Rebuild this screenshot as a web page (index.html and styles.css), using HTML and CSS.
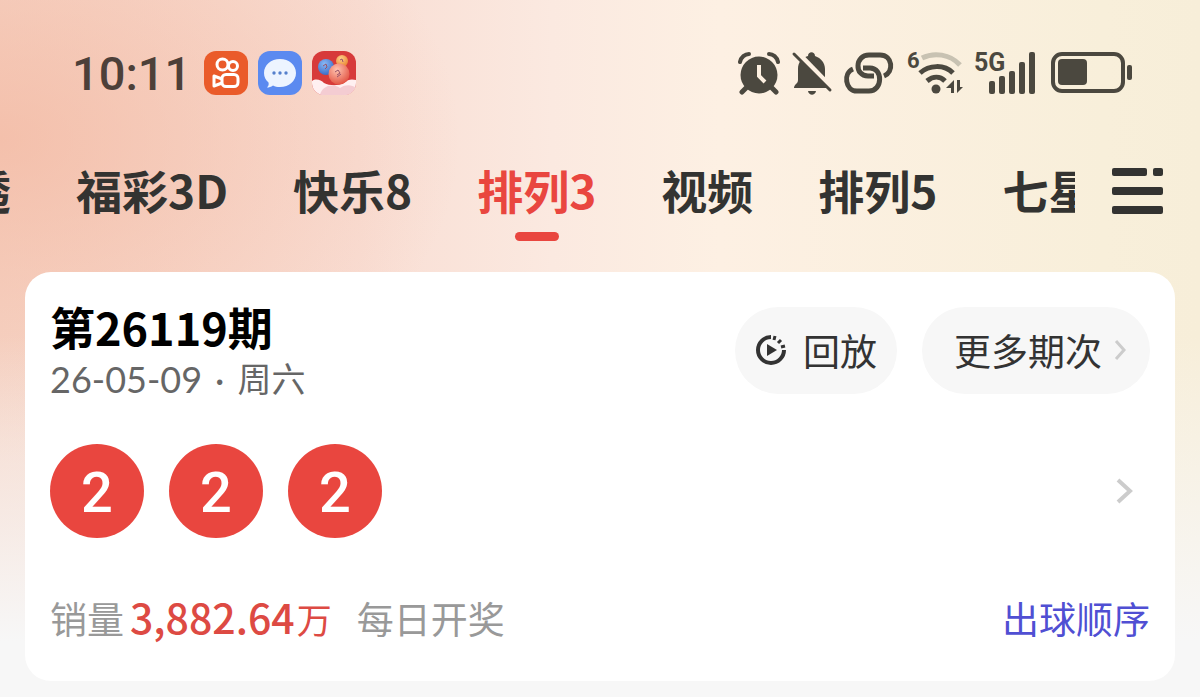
FILE: index.html
```
<!DOCTYPE html>
<html lang="zh-CN">
<head>
    <meta charset="UTF-8">
    <meta name="viewport" content="width=device-width, initial-scale=1.0">
    <title>排列3</title>
    <link rel="stylesheet" href="styles.css">
</head>
<body>
    <header class="status-bar">
        <div class="status-left">
            <span class="time">10:11</span>
            <svg class="app-icon" viewBox="0 0 44 44">
                <rect width="44" height="44" rx="12" fill="#ea5b2a"/>
                <g fill="none" stroke="#fff" stroke-width="3" stroke-linejoin="round">
                    <circle cx="18.500" cy="13.500" r="5.500"/>
                    <circle cx="29" cy="15" r="4.500"/>
                    <rect x="18" y="23.500" width="16" height="12" rx="4"/>
                    <path d="M18 28l-8-3v10l8-3"/>
                </g>
            </svg>
            <svg class="app-icon" viewBox="0 0 44 44">
                <rect width="44" height="44" rx="12" fill="#5b8af0"/>
                <path d="M22 8c9 0 16 6 16 14s-7 14-16 14c-3 0-5-.5-7-1.500-2 1.500-4 2-6 2 1.500-1.500 2-3 1.500-5C7.500 29 6 26 6 22 6 14 13 8 22 8z" fill="#edf4ff"/>
                <g fill="#5580cc"><circle cx="16" cy="22" r="1.700"/><circle cx="22" cy="22" r="1.700"/><circle cx="28" cy="22" r="1.700"/></g>
            </svg>
            <svg class="app-icon" viewBox="0 0 44 44">
                <defs>
                    <clipPath id="tile"><rect width="44" height="44" rx="12"/></clipPath>
                    <radialGradient id="ball-blue" cx=".4" cy=".3" r=".7"><stop offset="0" stop-color="#8ab9f5"/><stop offset="1" stop-color="#3b6cc8"/></radialGradient>
                    <radialGradient id="ball-red" cx=".4" cy=".3" r=".7"><stop offset="0" stop-color="#ffc4b0"/><stop offset="1" stop-color="#e35645"/></radialGradient>
                    <radialGradient id="ball-gold" cx=".4" cy=".3" r=".7"><stop offset="0" stop-color="#ffd08a"/><stop offset="1" stop-color="#ea8735"/></radialGradient>
                </defs>
                <g clip-path="url(#tile)">
                    <rect width="44" height="44" fill="#d73a3a"/>
                    <path d="M0 30c4-3 9-1 12 2 6 3 14 3 20 0 4-4 8-4 12-3v15H0z" fill="#fff0f1"/>
                    <path d="M8 44c2-9 12-12 20-7 6-4 12-3 16 0v7z" fill="#f4ccd2"/>
                    <circle cx="30" cy="10" r="6" fill="url(#ball-gold)"/>
                    <circle cx="14" cy="16" r="8" fill="url(#ball-blue)"/>
                    <circle cx="27" cy="23" r="10.500" fill="url(#ball-red)"/>
                    <path d="M11 15l3-2 1 3-2 2M28 9l2-1 1 3M23 21l3-2 2 3-3 2m0 2l4-3" fill="none" stroke="#9a5368" stroke-width="1"/>
                </g>
            </svg>
        </div>
        <div class="status-right">
            <svg width="42" height="44" viewBox="0 0 42 44" fill="#4b483f">
                <circle cx="21" cy="24" r="18.500"/>
                <path d="M8 37l-4 4M34 37l4 4" stroke="#4b483f" stroke-width="5" stroke-linecap="round"/>
                <path d="M2 11c1-5 5-8 9-8M40 11c-1-5-5-8-9-8" fill="none" stroke="#4b483f" stroke-width="4" stroke-linecap="round"/>
                <path d="M21 14v11l6 6" fill="none" stroke="#fdf0e1" stroke-width="4"/>
            </svg>
            <svg width="38" height="44" viewBox="0 0 38 44" fill="#4b483f">
                <path d="M15 5c0-5 7-5 7 0 6 2 10 7 10 13v12l4 7H1c0-4 4-4 4-8V18C5 11 9 7 15 5z"/>
                <path d="M15 40h8c-1 5-7 5-8 0z"/>
                <path d="M4 1l36 37" stroke="#fdf0e1" stroke-width="5"/>
                <path d="M1 3l36 36" stroke="#4b483f" stroke-width="3" stroke-linecap="round"/>
            </svg>
            <svg width="50" height="44" viewBox="0 0 50 44" fill="none" stroke="#4b483f" stroke-width="5">
                <path d="M40 25C50 21 49 4 36 4H25C11 4 10 25 24 25h6"/>
                <path d="M9 18C-1 22 1 40 13 40h12c14 0 14-23 1-23h-7"/>
            </svg>
            <svg width="56" height="44" viewBox="0 0 56 44">
                <text class="wifi-label" x="0" y="17">6</text>
                <g fill="none" stroke="#4b483f" stroke-width="5">
                    <path d="M15 7c12-6 28-4 38 7" stroke="#c8c2b2"/>
                    <path d="M13 22c9-8 24-9 33 0"/>
                    <path d="M20 30c6-5 13-5 18 0"/>
                </g>
                <circle cx="29" cy="38" r="4.500" fill="#4b483f"/>
                <path d="M47 29v13h-3v-5h-5zM50 29v13l6-6h-3v-7z" fill="#4b483f"/>
            </svg>
            <svg width="62" height="44" viewBox="2 0 62 44" fill="#4b483f">
                <text class="net-label" x="0" y="20">5G</text>
                <rect x="15" y="30" width="6" height="13" rx="2"/>
                <rect x="25" y="25" width="6" height="18" rx="2"/>
                <rect x="35" y="20" width="6" height="23" rx="2"/>
                <rect x="45" y="11" width="6" height="32" rx="2"/>
                <rect x="55" y="1" width="6" height="42" rx="2"/>
            </svg>
            <svg width="82" height="44" viewBox="0 0 82 44" fill="#4b483f">
                <rect x="2" y="3" width="70" height="37" rx="9" fill="none" stroke="#4b483f" stroke-width="4"/>
                <rect x="7" y="8" width="29" height="26" rx="4"/>
                <rect x="76" y="14" width="5" height="15" rx="2"/>
            </svg>
        </div>
    </header>

    <nav class="tabs">
        <div class="tab-list">
            <a href="#" class="tab">大乐透</a>
            <a href="#" class="tab">福彩3D</a>
            <a href="#" class="tab">快乐8</a>
            <a href="#" class="tab active">排列3</a>
            <a href="#" class="tab">视频</a>
            <a href="#" class="tab">排列5</a>
            <a href="#" class="tab">七星彩</a>
        </div>
        <button class="menu-btn" aria-label="菜单">
            <svg width="52" height="46" viewBox="0 0 52 46" fill="#333331">
                <rect x="0" y="0" width="35" height="8" rx="2"/>
                <rect x="41" y="0" width="10" height="8" rx="2"/>
                <rect x="0" y="19" width="51" height="8" rx="2"/>
                <rect x="0" y="38" width="51" height="8" rx="2"/>
            </svg>
        </button>
    </nav>

    <main class="card">
        <div class="card-head">
            <div class="issue">
                <h1>第26119期</h1>
                <p class="date">26-05-09<span class="dot">·</span><span class="weekday">周六</span></p>
            </div>
            <div class="actions">
                <button class="pill">
                    <svg width="32" height="32" viewBox="0 0 32 32" fill="none" stroke="#333" stroke-width="4">
                        <path d="M16 3a13 13 0 1 0 13 13"/>
                        <path d="M20 2l-1 4M26 6l-3 3M30 12l-4 1" stroke-width="3"/>
                        <path d="M12 10v12l10-6z" fill="#333" stroke="none"/>
                    </svg>
                    回放
                </button>
                <button class="pill more">
                    更多期次
                    <svg width="12" height="20" viewBox="0 0 12 20" fill="none" stroke="#ccc" stroke-width="3"><path d="M2 1l8 9-8 9"/></svg>
                </button>
            </div>
        </div>

        <a href="#" class="result">
            <span class="ball">2</span>
            <span class="ball">2</span>
            <span class="ball">2</span>
            <svg class="arrow" width="18" height="26" viewBox="0 0 18 26" fill="none" stroke="#ccc" stroke-width="4"><path d="M2 2l12 11L2 24"/></svg>
        </a>

        <div class="card-foot">
            <span>销量</span>
            <strong class="sales">3,882.64<small>万</small></strong>
            <span>每日开奖</span>
            <a href="#" class="order">出球顺序</a>
        </div>
    </main>
</body>
</html>
```
FILE: styles.css
```
* {
    box-sizing: border-box;
}
body {
    margin: 0;
    min-height: 100vh;
    overflow: hidden;
    font-family: "Noto Sans CJK SC", sans-serif;
    color: #333331;
    background:
        linear-gradient(to bottom, rgba(247,247,247,0) 48%, #f7f7f7 92%),
        radial-gradient(ellipse 460px 320px at 0 140px, rgba(243,180,156,0.65), rgba(244,190,168,0)),
        linear-gradient(to right, #f6d6c8 0%, #f9ded4 30%, #fbe9e0 46%, #fdf0e3 60%, #f8efda 92%, #f7eed9 100%);
}
a {
    color: inherit;
    text-decoration: none;
}
button {
    border: none;
    font-family: inherit;
    color: inherit;
    cursor: pointer;
}
svg {
    display: block;
    flex-shrink: 0;
    overflow: visible;
}
.status-bar {
    display: flex;
    justify-content: space-between;
    align-items: center;
    height: 146px;
    padding: 0 67px 0 72px;
}
.status-left {
    display: flex;
    align-items: center;
    gap: 10px;
}
.time {
    margin-right: 3px;
    padding-top: 2px;
    font-family: Roboto, sans-serif;
    font-size: 47px;
    font-weight: 500;
    line-height: 48px;
    color: #4d4039;
}
.app-icon {
    width: 44px;
    height: 44px;
}
.status-right {
    display: flex;
    align-items: center;
    gap: 13px;
}
.wifi-label,
.net-label {
    font-family: Roboto, sans-serif;
    font-weight: 700;
    fill: #4b483f;
}
.wifi-label {
    font-size: 22px;
}
.net-label {
    font-size: 25px;
}
.tabs {
    display: flex;
    align-items: flex-start;
    height: 96px;
    margin-bottom: 30px;
    padding-right: 36px;
}
/* scrolled a little, the first tab runs off the left edge */
.tab-list {
    flex: 1;
    min-width: 0;
    display: flex;
    gap: 65px;
    margin-right: 37px;
    overflow: hidden;
}
.tab {
    flex-shrink: 0;
    display: flex;
    flex-direction: column;
    align-items: center;
    height: 96px;
    padding-top: 13px;
    font-size: 46px;
    font-weight: 700;
    line-height: 60px;
}
.tab:first-child {
    margin-left: -127px;
}
.active {
    color: #e9463f;
}
.active::after {
    content: "";
    flex-shrink: 0;
    width: 44px;
    height: 9px;
    margin-top: 13px;
    border-radius: 5px;
    background: #e9463f;
}
.menu-btn {
    margin-top: 22px;
    padding: 0;
    background: none;
}
.card {
    margin: 0 25px;
    padding: 30px 25px 35px;
    border-radius: 26px;
    background: #fff;
}
.card-head {
    display: flex;
    justify-content: space-between;
}
h1 {
    margin: 0;
    font-size: 45px;
    font-weight: 700;
    line-height: 50px;
    color: #000;
}
.date {
    display: flex;
    margin: 0;
    font-family: Lato, "Noto Sans CJK SC", sans-serif;
    font-size: 36px;
    line-height: 54px;
    color: #666;
}
.dot {
    margin: 0 13px;
}
.weekday {
    font-size: 34px;
}
.actions {
    display: flex;
    align-items: flex-start;
    gap: 25px;
}
.pill {
    display: flex;
    align-items: center;
    gap: 16px;
    height: 87px;
    margin-top: 5px;
    padding: 0 20px 2px;
    border-radius: 44px;
    background: #f7f7f7;
    font-size: 37px;
    color: #333;
}
.more {
    gap: 12px;
    padding: 0 24px 2px 32px;
}
.result {
    display: flex;
    align-items: center;
    gap: 25px;
    margin-top: 38px;
}
.ball {
    width: 94px;
    height: 94px;
    padding-top: 2px;
    border-radius: 50%;
    background: #e9463f;
    font-family: Roboto, sans-serif;
    font-size: 56px;
    font-weight: 500;
    line-height: 94px;
    text-align: center;
    color: #fff;
}
.arrow {
    margin: 0 16px 0 auto;
}
.card-foot {
    display: flex;
    align-items: center;
    margin-top: 51px;
    font-size: 37px;
    line-height: 54px;
    color: #999;
}
.sales {
    margin: 0 25px 0 6px;
    font-size: 41px;
    font-weight: 500;
    color: #dd4a43;
}
.sales small {
    margin-left: 2px;
    font-size: 35px;
    font-weight: 400;
}
.order {
    margin-left: auto;
    color: #504fd3;
}
```
